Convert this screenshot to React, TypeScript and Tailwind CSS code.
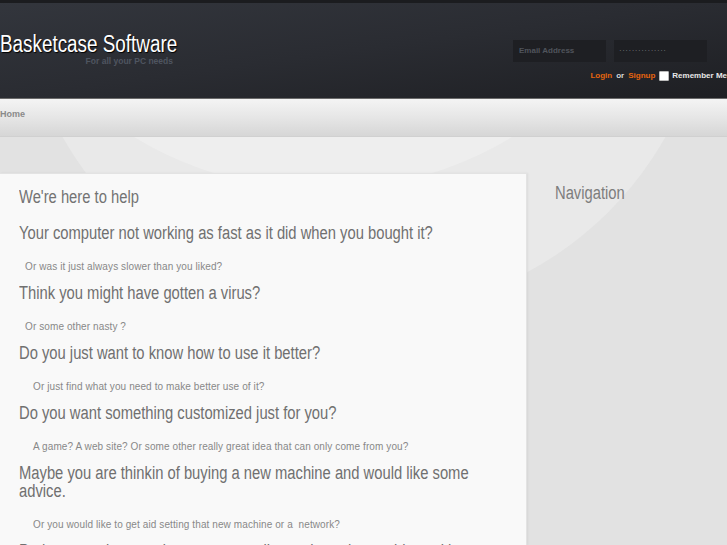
import React from 'react';

// no condensed face is installed, so the headings are squeezed horizontally
const heading =
  "font-['Liberation_Sans',Arial,sans-serif] text-[18px] leading-[18px] origin-left scale-x-[0.82]";

const sections = [
  { q: 'Your computer not working as fast as it did when you bought it?', a: 'Or was it just always slower than you liked?', indent: 'pl-[6px]' },
  { q: 'Think you might have gotten a virus?', a: 'Or some other nasty ?', indent: 'pl-[6px]' },
  { q: 'Do you just want to know how to use it better?', a: 'Or just find what you need to make better use of it?', indent: 'pl-[14px]' },
  { q: 'Do you want something customized just for you?', a: 'A game? A web site? Or some other really great idea that can only come from you?', indent: 'pl-[14px]' },
  { q: 'Maybe you are thinkin of buying a new machine and would like some advice.', a: 'Or you would like to get aid setting that new machine or a\u00a0 network?', indent: 'pl-[14px]' },
  { q: 'Perhaps you just need someone to talk you through a problem with a program you use every day?', a: '', indent: 'pl-[14px]' },
];

export default function App() {
  return (
    <div className="w-[727px] h-[545px] overflow-hidden flex flex-col bg-[#e2e2e2] font-['Liberation_Sans',Arial,sans-serif]">
      {/* Header */}
      <header className="h-[98px] flex-shrink-0 flex flex-col bg-gradient-to-br from-[#33363d] via-[#2a2c32] to-[#1e1f23]">
        <div className="h-[3px] bg-[#1b1c1f]" />
        <div className="flex-1 flex justify-between">
          <div className="w-[173px] self-start mt-[28px]">
            <h1 className="w-[211px] whitespace-nowrap origin-left scale-x-[0.82] text-[23px] leading-[26px] text-white [text-shadow:1px_1px_1px_#000]">
              Basketcase Software
            </h1>
            <p className="text-right text-[8.5px] leading-[10px] font-bold text-[#4f5560] mt-[-1px]">For all your PC needs</p>
          </div>
          <div className="flex flex-col items-end pr-[20px] pt-[37px]">
            <div className="flex gap-[8px]">
              <div className="w-[93px] h-[22px] bg-[#1e1f23] flex items-center px-[6px] text-[8px] font-bold text-[#50545c]">
                Email Address
              </div>
              <div className="w-[93px] h-[22px] bg-[#1e1f23] flex items-center px-[5px] text-[8px] tracking-[0.5px] text-[#7a7d83]">
                ···············
              </div>
            </div>
            <div className="flex items-center mt-[8px] mr-[-20px] whitespace-nowrap text-[8px] font-bold leading-[12px]">
              <span className="text-[#e6650e]">Login</span>
              <span className="text-[#d8d8d8] mx-[4px]">or</span>
              <span className="text-[#e6650e]">Signup</span>
              <span className="w-[10px] h-[10px] bg-white rounded-[1px] border border-[#bbb] ml-[4px] mr-[3px]" />
              <span className="text-[#e8e8e8]">Remember Me</span>
            </div>
          </div>
        </div>
      </header>
      <div className="h-[1px] bg-[#6a6a6a] flex-shrink-0" />

      {/* Nav bar */}
      <nav className="h-[38px] flex-shrink-0 flex items-center bg-gradient-to-b from-[#f4f4f4] via-[#e6e6e6] to-[#d6d6d6] border-b border-[#d0d0d0]">
        <span className="text-[9px] font-bold text-[#8a8a8a] mt-[-6px]">Home</span>
      </nav>

      {/* Body */}
      <div className="relative flex-1 overflow-hidden">
        <div className="absolute left-[18px] top-[-516px] w-[692px] h-[692px] rounded-full bg-[#e9e9e9]" />
        <div className="absolute left-[-40px] top-[-673px] w-[726px] h-[726px] rounded-full bg-[#eeeeee]" />

        <div className="relative flex h-full">
          <main className="w-[527px] flex-shrink-0 mt-[36px] bg-[#f9f9f9] border-r border-t border-[#e3e3e3] shadow-[1px_0_2px_rgba(0,0,0,0.06)] pl-[19px] pr-[19px] pt-[14px]">
            <h2 className={`${heading} w-[595px] text-[#737373] mb-[18px]`}>We're here to help</h2>
            {sections.map((s) => (
              <div key={s.q}>
                <h3 className={`${heading} w-[595px] text-[#707070] mb-[19px]`}>{s.q}</h3>
                {s.a && (
                  <p className={`${s.indent} text-[10px] leading-[12px] tracking-[0.1px] text-[#888] mb-[11px]`}>{s.a}</p>
                )}
              </div>
            ))}
          </main>
          <aside className="flex-1 pl-[28px] pt-[47px]">
            <h2 className={`${heading} text-[#7d7d7d]`}>Navigation</h2>
          </aside>
        </div>
      </div>
    </div>
  );
}
